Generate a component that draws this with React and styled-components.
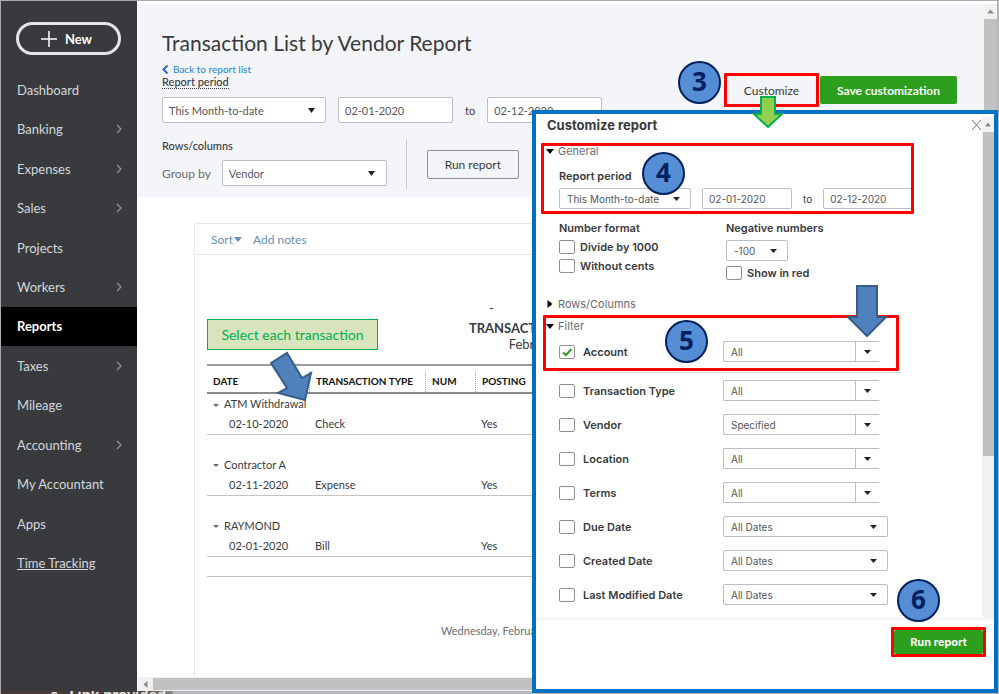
import React from 'react'
import styled, { createGlobalStyle, css } from 'styled-components'

const GlobalStyle = createGlobalStyle`
  * {
    box-sizing: border-box;
  }

  body {
    margin: 0;
    overflow: hidden;
    font-family: Lato, 'Liberation Sans', sans-serif;
    color: #393a3d;
    background: #b4b6ba;
  }

  button,
  input,
  select {
    font-family: inherit;
    color: inherit;
    margin: 0;
  }
`

const Screen = styled.div`
  position: relative;
  display: flex;
  flex-direction: column;
  height: 100vh;
  border: 1px solid #a9abb0;
  border-width: 1px 0 0 1px;
`

const Window = styled.div`
  display: flex;
  flex: 1;
  min-height: 0;
  margin-right: 2px;
  background: #ffffff;
`

const BottomStrip = styled.div`
  height: 3px;
  overflow: hidden;
  padding-left: 49px;
  font-size: 16px;
  font-weight: 700;
  line-height: 6px;
  white-space: pre;
  color: #e4e4e4;
  background: linear-gradient(to right, #4b3a33 136px, #8f8a88 172px, #b4b6ba 172px);
`

/* ---------- sidebar ---------- */

const Sidebar = styled.aside`
  display: flex;
  flex-direction: column;
  flex-shrink: 0;
  width: 136px;
  padding: 21px 0 108px;
  background: #393a3d;
`

const NewButton = styled.button`
  display: flex;
  align-items: center;
  justify-content: center;
  gap: 8px;
  flex-shrink: 0;
  height: 33px;
  margin: 0 16px 15px 15px;
  padding: 0 4px 0 0;
  border: 3px solid #e3e5e8;
  border-radius: 17px;
  background: transparent;
  color: #ffffff;
  font-size: 13px;
  font-weight: 700;
`

const Nav = styled.nav`
  display: grid;
  grid-auto-rows: 1fr;
  flex: 1;
`

const NavLink = styled.a`
  display: flex;
  align-items: center;
  justify-content: space-between;
  padding: 0 15px 0 16px;
  font-size: 13px;
  color: #d4d7dc;
  text-decoration: ${({ $underline }) => ($underline ? 'underline' : 'none')};

  ${({ $active }) =>
    $active &&
    css`
      background: #000000;
      color: #ffffff;
      font-weight: 700;
    `}
`

/* ---------- page ---------- */

const Page = styled.main`
  display: flex;
  flex-direction: column;
  flex: 1;
  min-width: 0;
  padding-left: 1px;
`

const PageBody = styled.div`
  display: flex;
  flex-direction: column;
  flex: 1;
  min-height: 0;
`

const Header = styled.header`
  display: flex;
  justify-content: space-between;
  margin-top: 3px;
  padding: 26px 26px 8px 24px;
  background: #f4f5f8;
`

const Title = styled.h1`
  margin: 0;
  font-size: 21px;
  line-height: 26px;
  font-weight: 400;
`

const BackLink = styled.a`
  display: flex;
  align-items: center;
  gap: 4px;
  margin-top: 7px;
  font-size: 10px;
  line-height: 13px;
  color: #1687d3;
  text-decoration: none;
`

const FieldLabel = styled.label`
  display: block;
  width: max-content;
  font-size: 11px;
  line-height: 12px;
  font-weight: 500;
  border-bottom: ${({ $dotted }) => ($dotted ? '1px dotted #393a3d' : '0')};
`

const PeriodRow = styled.div`
  display: flex;
  align-items: center;
  gap: 12px;
  margin-top: 8px;
  font-size: 11px;
`

const GroupRow = styled.div`
  display: flex;
  align-items: center;
  gap: 20px;
  margin-top: 17px;
`

const GroupFields = styled.div`
  display: flex;
  flex-direction: column;
  gap: 8px;
  height: 49px;
  padding-right: 19px;
  border-right: 1px solid #c6c9cf;
`

const GroupBy = styled.div`
  display: flex;
  align-items: center;
  gap: 11px;
  font-size: 12px;
  color: #6b6c72;
`

const SelectBox = styled.span`
  display: inline-grid;
  grid-template-columns: 1fr ${({ $arrow }) => $arrow || 28}px;
  align-items: center;
  justify-items: center;
  width: ${({ $width }) => $width}px;
  height: ${({ $small }) => ($small ? 21 : 26)}px;
  border: 1px solid #babec5;
  border-radius: 2px;
  background: #ffffff;

  select {
    grid-area: 1 / 1 / 2 / 3;
    width: 100%;
    height: 100%;
    padding: 0 0 0 ${({ $small }) => ($small ? 7 : 6)}px;
    border: 0;
    background: transparent;
    font-size: ${({ $small }) => ($small ? 10 : 11)}px;
    color: #55565b;
    appearance: none;
  }

  svg {
    grid-area: 1 / 2 / 2 / 3;
    pointer-events: none;
  }

  ${({ $split }) =>
    $split &&
    css`
      border-right-color: #ffffff;

      &::after {
        content: '';
        grid-area: 1 / 2 / 2 / 3;
        justify-self: start;
        align-self: stretch;
        border-left: 1px solid #babec5;
        pointer-events: none;
      }
    `}
`

const DateInput = styled.input`
  width: ${({ $small }) => ($small ? 90 : 115)}px;
  height: ${({ $small }) => ($small ? 21 : 26)}px;
  padding: 0 6px;
  border: 1px solid #babec5;
  border-radius: 2px;
  background: #ffffff;
  font-size: ${({ $small }) => ($small ? 10 : 11)}px;
  color: #55565b;
`

const OutlineButton = styled.button`
  width: 92px;
  height: 29px;
  padding: 0;
  border: 1px solid #8d9096;
  border-radius: 2px;
  background: #f4f5f8;
  font-size: 12px;
`

const Actions = styled.div`
  position: relative;
  z-index: 2;
  display: flex;
  align-self: flex-start;
  gap: 4px;
  margin-top: 46px;
`

const CustomizeButton = styled.button`
  width: 89px;
  height: 28px;
  padding: 0;
  border: 0;
  background: transparent;
  font-size: 12px;
`

const GreenButton = styled.button`
  width: ${({ $width }) => $width}px;
  height: ${({ $small }) => ($small ? 24 : 28)}px;
  padding: 0;
  border: 0;
  border-radius: 2px;
  background: #2ca01c;
  color: #ffffff;
  font-size: ${({ $small }) => ($small ? 11 : 12)}px;
  font-weight: 700;
`

/* ---------- report ---------- */

const Report = styled.section`
  position: relative;
  flex: 1;
  min-height: 0;
  margin: 26px 42px 0 56px;
  border: 1px solid #e3ebf2;
  border-bottom: 0;
`

const ReportToolbar = styled.div`
  display: flex;
  align-items: center;
  gap: 11px;
  height: 31px;
  padding-left: 16px;
  border-bottom: 1px solid #e3ebf2;
`

const ToolLink = styled.button`
  display: flex;
  align-items: center;
  gap: 1px;
  padding: 0;
  border: 0;
  background: none;
  font-size: 12px;
  color: #6a8fb3;
`

const ReportHeading = styled.div`
  padding-top: 46px;
  text-align: center;
  font-size: 13px;
  line-height: 15px;
`

const CompanyLine = styled.div`
  height: 18px;
  padding-right: 152px;
`

const ReportTitle = styled.h2`
  margin: 0;
  font-size: 13px;
  line-height: 18px;
`

const Table = styled.table`
  width: calc(100% - 24px);
  margin: 12px 12px 0;
  border-collapse: collapse;
  table-layout: fixed;
  font-size: 11px;
  border-bottom: 1px solid #c4c4c4;

  td,
  th {
    height: 20px;
    padding: 0 0 0 6px;
    text-align: left;
    font-weight: 400;
    white-space: nowrap;
  }
`

const HeadRow = styled.tr`
  border-top: 2px solid #9a9a9a;
  border-bottom: 2px solid #8a8a8a;

  th {
    height: 27px;
    padding: 5px 0 0;
    font-size: 10px;
    font-weight: 700;
    color: #111111;
  }

  span {
    display: block;
    padding-left: 6px;
    line-height: 21px;
  }

  th + th span {
    border-left: 1px dotted #a0a0a0;
  }
`

const GroupTitleRow = styled.tr`
  svg {
    margin-right: 5px;
    vertical-align: middle;
  }
`

const EntryRow = styled.tr`
  border-bottom: 1px solid #c4c4c4;

  td {
    height: 21px;
  }

  td:first-child {
    padding-left: 22px;
  }
`

const PrintDate = styled.p`
  margin: 47px 0 0 246px;
  font-size: 11px;
  line-height: 14px;
  color: #6b6c72;
`

const Callout = styled.div`
  position: absolute;
  top: 95px;
  left: 12px;
  width: 171px;
  border: 1px solid #00b050;
  background: #d8e4bc;
  font-size: 14px;
  line-height: 29px;
  text-align: center;
  color: #00b050;
`

/* ---------- scroll bars ---------- */

const HorizontalBar = styled.div`
  display: flex;
  align-items: center;
  height: 14px;
  background: #f1f1f1;

  svg {
    width: 15px;
  }

  &::after {
    content: '';
    flex: 1;
    height: 12px;
    background: #c1c1c1;
  }
`

const VerticalBar = styled.div`
  display: flex;
  flex-direction: column;
  align-items: flex-end;
  flex-shrink: 0;
  width: ${({ $thin }) => ($thin ? 12 : 14)}px;
  margin-top: 3px;
  background: #f1f1f1;

  svg {
    height: 15px;
    margin-right: 3px;
    flex-shrink: 0;
  }

  &::after {
    content: '';
    width: ${({ $thin }) => ($thin ? 11 : 13)}px;
    height: ${({ $thumb }) => $thumb};
    background: #c1c1c1;
  }
`

/* ---------- customize panel ---------- */

const Panel = styled.section`
  position: absolute;
  z-index: 1;
  top: 109px;
  right: 1px;
  bottom: 1px;
  display: flex;
  flex-direction: column;
  width: 466px;
  border: 4px solid #0070c0;
  background: #ffffff;
  font-family: Inter, 'Liberation Sans', sans-serif;
`

const PanelMain = styled.div`
  display: flex;
  flex: 1;
  min-height: 0;
  border-bottom: 3px solid #f4f5f8;
`

const PanelContent = styled.div`
  flex: 1;
  min-width: 0;
  padding: 3px 0 0 5px;
`

const PanelTitleRow = styled.div`
  display: flex;
  align-items: center;
  justify-content: space-between;
  height: 16px;
  margin-bottom: 10px;
  padding-left: 6px;
`

const PanelTitle = styled.h2`
  margin: 0;
  font-size: 13px;
  font-weight: 700;
`

const CloseButton = styled.button`
  display: flex;
  padding: 0;
  border: 0;
  background: none;
  color: #6b6c72;
`

const SectionToggle = styled.button`
  display: flex;
  align-items: center;
  gap: 4px;
  height: 16px;
  padding: 0 0 0 5px;
  border: 0;
  background: none;
  font-size: 11px;
  color: #6b6c72;

  svg {
    width: 8px;
  }
`

const GeneralBox = styled.div`
  position: relative;
  width: 373px;
  height: 71px;
`

const PanelLabel = styled.label`
  display: block;
  font-size: 11px;
  line-height: 16px;
  font-weight: 600;
`

const PanelFields = styled.div`
  padding: 9px 0 0 18px;
`

const PanelPeriod = styled.div`
  display: flex;
  align-items: center;
  gap: 11px;
  margin-top: 4px;
  font-size: 10px;
`

const FormatGrid = styled.div`
  display: grid;
  grid-template-columns: 167px 1fr;
  margin: 6px 0 15px 18px;
`

const FormatColumn = styled.div`
  display: flex;
  flex-direction: column;
  align-items: flex-start;
  gap: ${({ $gap }) => $gap}px;
`

const CheckLabel = styled.label`
  display: flex;
  align-items: center;
  gap: ${({ $wide }) => ($wide ? 8 : 5)}px;
  height: 16px;
  font-size: 11px;
  font-weight: 600;
  white-space: nowrap;
`

const Checkbox = styled.input`
  width: 16px;
  height: 14px;
  border: 1px solid #8d9096;
  border-radius: 2px;
  background: #ffffff;
  appearance: none;

  &:checked {
    background: #ffffff
      url("data:image/svg+xml,%3Csvg xmlns='http://www.w3.org/2000/svg' viewBox='0 0 14 12'%3E%3Cpath d='M3 6.5l3 2.5 5.500-6' fill='none' stroke='%232ca01c' stroke-width='2'/%3E%3C/svg%3E")
      center / 14px 12px no-repeat;
  }
`

const FilterBox = styled.div`
  position: relative;
  display: flex;
  flex-direction: column;
  align-items: flex-start;
  gap: 7px;
  width: 356px;
  height: 56px;
  margin: 3px 0 0 2px;
  padding-top: 3px;

  ${SectionToggle} {
    padding-left: 3px;
  }
`

const FilterList = styled.div`
  display: flex;
  flex-direction: column;
  gap: 13px;
  width: 342px;
  margin: 1px 0 0 18px;
  padding-top: 7px;
  border-top: 1px solid #d4d7dc;
`

const FilterRow = styled.div`
  display: grid;
  grid-template-columns: 164px 1fr;
  align-items: center;
  margin-left: ${({ $inset }) => $inset || 0}px;
`

const PanelFooter = styled.footer`
  display: flex;
  justify-content: flex-end;
  height: 69px;
  padding: 10px 11px 0 0;
`

const Anchor = styled.div`
  position: relative;
  align-self: flex-start;
`

/* ---------- annotations ---------- */

const RedBox = styled.div`
  position: absolute;
  inset: ${({ $spread }) => -($spread || 0)}px;
  border: 3px solid #ff0000;
  border-radius: 1px;
  pointer-events: none;
`

const StepBadge = styled.span`
  position: absolute;
  top: ${({ $top }) => $top}px;
  left: ${({ $left }) => $left}px;
  display: flex;
  align-items: center;
  justify-content: center;
  width: 43px;
  height: 43px;
  padding-bottom: 3px;
  border: 2px solid #002060;
  border-radius: 50%;
  background: #558ed5;
  color: #002060;
  font-family: 'Open Sans', sans-serif;
  font-size: 26px;
  font-weight: 700;
  pointer-events: none;
`

const Arrow = styled.svg`
  position: absolute;
  top: ${({ $top }) => $top}px;
  left: ${({ $left }) => $left}px;
  pointer-events: none;
`

const Caret = ({ dir = 'down', w = 7, h = 5, color = '#222222' }) => {
  const points = {
    down: `0,0 ${w},0 ${w / 2},${h}`,
    up: `0,${h} ${w},${h} ${w / 2},0`,
    left: `${w},0 ${w},${h} 0,${h / 2}`,
    right: `0,0 ${w},${h / 2} 0,${h}`,
  }
  return (
    <svg width={w} height={h} viewBox={`0 0 ${w} ${h}`} aria-hidden="true">
      <polygon points={points[dir]} fill={color} />
    </svg>
  )
}

const Chevron = () => (
  <svg width="6" height="10" viewBox="0 0 6 10" aria-hidden="true">
    <path d="M1 1l4 4-4 4" fill="none" stroke="#8d9096" strokeWidth="1.3" />
  </svg>
)

const Dropdown = ({ id, value, label, ...box }) => (
  <SelectBox {...box}>
    <select id={id} aria-label={label} defaultValue={value}>
      <option>{value}</option>
    </select>
    <Caret h={box.$small ? 4 : 5} />
  </SelectBox>
)

const navItems = [
  { name: 'Dashboard' },
  { name: 'Banking', more: true },
  { name: 'Expenses', more: true },
  { name: 'Sales', more: true },
  { name: 'Projects' },
  { name: 'Workers', more: true },
  { name: 'Reports', active: true },
  { name: 'Taxes', more: true },
  { name: 'Mileage' },
  { name: 'Accounting', more: true },
  { name: 'My Accountant' },
  { name: 'Apps' },
  { name: 'Time Tracking', underline: true },
]

const entries = [
  { vendor: 'ATM Withdrawal', date: '02-10-2020', type: 'Check' },
  { vendor: 'Contractor A', date: '02-11-2020', type: 'Expense' },
  { vendor: 'RAYMOND', date: '02-01-2020', type: 'Bill' },
]

const filters = [
  { name: 'Transaction Type', value: 'All', split: true },
  { name: 'Vendor', value: 'Specified', split: true },
  { name: 'Location', value: 'All', split: true },
  { name: 'Terms', value: 'All', split: true },
  { name: 'Due Date', value: 'All Dates' },
  { name: 'Created Date', value: 'All Dates' },
  { name: 'Last Modified Date', value: 'All Dates' },
]

const Filter = ({ name, value, split, checked, inset }) => (
  <FilterRow $inset={inset}>
    <CheckLabel $wide>
      <Checkbox type="checkbox" defaultChecked={checked} />
      {name}
    </CheckLabel>
    <Dropdown
      label={name}
      value={value}
      $small
      $split={split}
      $width={split ? 157 : 165}
      $arrow={split ? 24 : 27}
    />
  </FilterRow>
)

const SideMenu = () => (
  <Sidebar>
    <NewButton>
      <svg width="16" height="16" viewBox="0 0 16 16" aria-hidden="true">
        <path d="M8 0v16M0 8h16" stroke="#ffffff" strokeWidth="1.5" />
      </svg>
      New
    </NewButton>
    <Nav>
      {navItems.map(({ name, more, active, underline }) => (
        <NavLink href="#" key={name} $active={active} $underline={underline}>
          {name}
          {more && <Chevron />}
        </NavLink>
      ))}
    </Nav>
  </Sidebar>
)

const ReportHeader = () => (
  <Header>
    <div>
      <Title>Transaction List by Vendor Report</Title>
      <BackLink href="#">
        <svg width="7" height="9" viewBox="0 0 7 9" aria-hidden="true">
          <path d="M5.500 0.500l-4 4 4 4" fill="none" stroke="#3a5fb8" strokeWidth="2" />
        </svg>
        Back to report list
      </BackLink>
      <FieldLabel htmlFor="period" $dotted>
        Report period
      </FieldLabel>
      <PeriodRow>
        <Dropdown id="period" value="This Month-to-date" $width={164} />
        <DateInput aria-label="From date" defaultValue="02-01-2020" />
        to
        <DateInput aria-label="To date" defaultValue="02-12-2020" />
      </PeriodRow>
      <GroupRow>
        <GroupFields>
          <FieldLabel as="span">Rows/columns</FieldLabel>
          <GroupBy>
            <label htmlFor="group">Group by</label>
            <Dropdown id="group" value="Vendor" $width={165} />
          </GroupBy>
        </GroupFields>
        <OutlineButton>Run report</OutlineButton>
      </GroupRow>
    </div>
    <Actions>
      <Anchor>
        <CustomizeButton>Customize</CustomizeButton>
        <RedBox $spread={3} />
        <StepBadge $top={-15} $left={-49}>3</StepBadge>
        <Arrow $top={20} $left={25} width="32" height="33" viewBox="0 0 32 33">
          <path
            d="M9 1h14v17h7L16 31 2 18h7z"
            fill="#92d050"
            stroke="#00b050"
            strokeWidth="2"
          />
        </Arrow>
      </Anchor>
      <GreenButton $width={137}>Save customization</GreenButton>
    </Actions>
  </Header>
)

const ReportCard = () => (
  <Report>
    <ReportToolbar>
      <ToolLink>
        Sort
        <Caret w={8} color="#6a8fb3" />
      </ToolLink>
      <ToolLink>Add notes</ToolLink>
    </ReportToolbar>
    <ReportHeading>
      <CompanyLine>-</CompanyLine>
      <ReportTitle>TRANSACTION LIST BY VENDOR</ReportTitle>
      February 1-12, 2020
    </ReportHeading>
    <Table>
      <colgroup>
        <col width="102" />
        <col width="116" />
        <col width="50" />
        <col />
      </colgroup>
      <thead>
        <HeadRow>
          <th><span>DATE</span></th>
          <th><span>TRANSACTION TYPE</span></th>
          <th><span>NUM</span></th>
          <th><span>POSTING</span></th>
        </HeadRow>
      </thead>
      <tbody>
        {entries.map(({ vendor, date, type }) => (
          <React.Fragment key={vendor}>
            <GroupTitleRow>
              <td colSpan="4">
                <Caret w={6} h={3} color="#6b6c72" />
                {vendor}
              </td>
            </GroupTitleRow>
            <EntryRow>
              <td>{date}</td>
              <td>{type}</td>
              <td />
              <td>Yes</td>
            </EntryRow>
            <tr>
              <td colSpan="4" />
            </tr>
          </React.Fragment>
        ))}
      </tbody>
    </Table>
    <PrintDate>Wednesday, February 12, 2020</PrintDate>
    <Callout>Select each transaction</Callout>
    <Arrow $top={127} $left={74} width="46" height="52" viewBox="0 0 46 52">
      <path
        d="M2 12L18 2l15 25 9-5-6 27-27-7 9-5z"
        fill="#4f81bd"
        stroke="#385d8a"
        strokeWidth="2"
      />
    </Arrow>
  </Report>
)

const CustomizePanel = () => (
  <Panel>
    <PanelMain>
      <PanelContent>
        <PanelTitleRow>
          <PanelTitle>Customize report</PanelTitle>
          <CloseButton aria-label="Close">
            <svg width="11" height="10" viewBox="0 0 11 10" aria-hidden="true">
              <path d="M1 0l9 10M10 0L1 10" stroke="currentColor" />
            </svg>
          </CloseButton>
        </PanelTitleRow>
        <GeneralBox>
          <SectionToggle>
            <Caret w={8} h={5} color="#000000" />
            General
          </SectionToggle>
          <PanelFields>
            <PanelLabel htmlFor="panel-period">Report period</PanelLabel>
            <PanelPeriod>
              <Dropdown id="panel-period" value="This Month-to-date" $small $width={132} />
              <DateInput aria-label="From" defaultValue="02-01-2020" $small />
              to
              <DateInput aria-label="To" defaultValue="02-12-2020" $small />
            </PanelPeriod>
          </PanelFields>
          <RedBox />
          <StepBadge $top={9} $left={101}>4</StepBadge>
        </GeneralBox>
        <FormatGrid>
          <FormatColumn $gap={3}>
            <PanelLabel as="span">Number format</PanelLabel>
            <CheckLabel>
              <Checkbox type="checkbox" />
              Divide by 1000
            </CheckLabel>
            <CheckLabel>
              <Checkbox type="checkbox" />
              Without cents
            </CheckLabel>
          </FormatColumn>
          <FormatColumn $gap={4}>
            <PanelLabel htmlFor="negative">Negative numbers</PanelLabel>
            <Dropdown id="negative" value="-100" $small $width={62} />
            <CheckLabel>
              <Checkbox type="checkbox" />
              Show in red
            </CheckLabel>
          </FormatColumn>
        </FormatGrid>
        <SectionToggle>
          <Caret dir="right" w={5} h={8} color="#000000" />
          Rows/Columns
        </SectionToggle>
        <FilterBox>
          <SectionToggle>
            <Caret w={8} h={5} color="#000000" />
            Filter
          </SectionToggle>
          <Filter name="Account" value="All" split checked inset={16} />
          <RedBox />
          <StepBadge $top={5} $left={122}>5</StepBadge>
          <Arrow $top={-30} $left={303} width="42" height="53" viewBox="0 0 42 53">
            <path
              d="M11 1h20v31h9L21 51 2 32h9z"
              fill="#4f81bd"
              stroke="#385d8a"
              strokeWidth="2"
            />
          </Arrow>
        </FilterBox>
        <FilterList>
          {filters.map((filter) => (
            <Filter key={filter.name} {...filter} />
          ))}
        </FilterList>
      </PanelContent>
      <VerticalBar $thin $thumb="324px">
        <Caret dir="up" w={6} h={4} color="#8a8a8a" />
      </VerticalBar>
    </PanelMain>
    <PanelFooter>
      <Anchor>
        <GreenButton $small $width={89}>Run report</GreenButton>
        <RedBox $spread={3} />
        <StepBadge $top={-51} $left={3}>6</StepBadge>
      </Anchor>
    </PanelFooter>
  </Panel>
)

const App = () => (
  <>
    <GlobalStyle />
    <Screen>
      <Window>
        <SideMenu />
        <Page>
          <PageBody>
            <ReportHeader />
            <ReportCard />
          </PageBody>
          <HorizontalBar>
            <Caret dir="left" w={4} h={7} color="#8a8a8a" />
          </HorizontalBar>
        </Page>
        <VerticalBar $thumb="100%">
          <Caret dir="up" w={7} h={4} color="#8a8a8a" />
        </VerticalBar>
      </Window>
      <BottomStrip>{'c.  Link provided'}</BottomStrip>
      <CustomizePanel />
    </Screen>
  </>
)

export default App
